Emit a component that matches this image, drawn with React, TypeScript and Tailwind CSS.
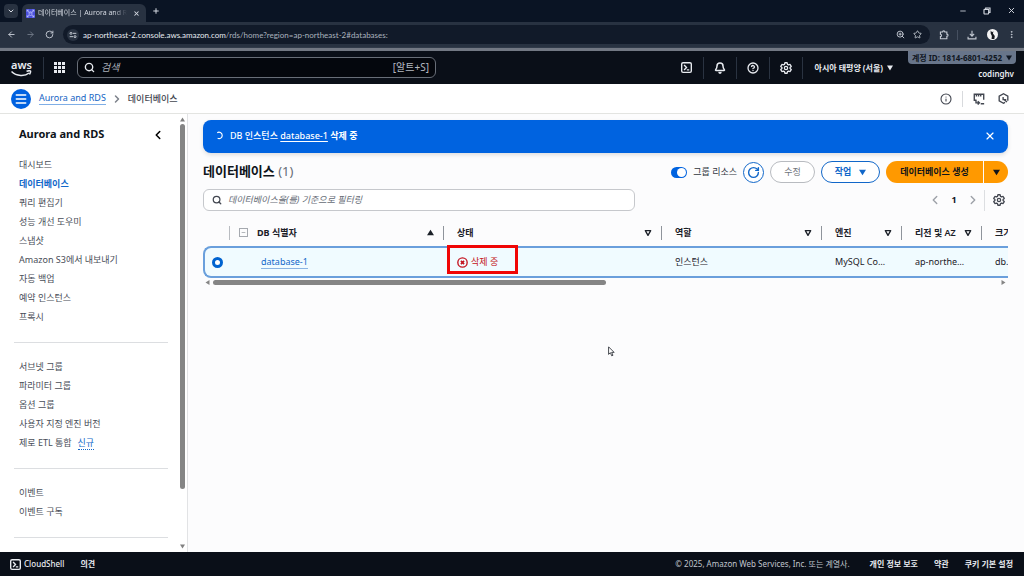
import type { ReactNode } from 'react'
import {
  ArrowLeft,
  ArrowRight,
  Bell,
  ChevronDown,
  ChevronLeft,
  ChevronRight,
  CircleHelp,
  EllipsisVertical,
  Info,
  Menu,
  Minus,
  Plus,
  RotateCw,
  Search,
  Star,
  X,
  ZoomIn,
} from 'lucide-react'

type NavItem = { label: string; active?: boolean; badge?: string }

const navSections: NavItem[][] = [
  [
    { label: '대시보드' },
    { label: '데이터베이스', active: true },
    { label: '쿼리 편집기' },
    { label: '성능 개선 도우미' },
    { label: '스냅샷' },
    { label: 'Amazon S3에서 내보내기' },
    { label: '자동 백업' },
    { label: '예약 인스턴스' },
    { label: '프록시' },
  ],
  [
    { label: '서브넷 그룹' },
    { label: '파라미터 그룹' },
    { label: '옵션 그룹' },
    { label: '사용자 지정 엔진 버전' },
    { label: '제로 ETL 통합', badge: '신규' },
  ],
  [{ label: '이벤트' }, { label: '이벤트 구독' }],
]

function Triangle({ className, direction = 'down' }: { className: string; direction?: 'up' | 'down' | 'left' | 'right' }) {
  const points = {
    up: '0,9 5,1 10,9',
    down: '0,1 10,1 5,9',
    left: '9,0 9,10 1,5',
    right: '1,0 1,10 9,5',
  }
  return (
    <svg viewBox="0 0 10 10" className={className} fill="currentColor" aria-hidden="true">
      <polygon points={points[direction]} />
    </svg>
  )
}

function FilterTriangle() {
  return (
    <svg viewBox="0 0 12 12" className="size-2 shrink-0" fill="none" stroke="currentColor" strokeWidth="2" strokeLinejoin="round" aria-hidden="true">
      <path d="M2 2.500h8L6 9.500z" />
    </svg>
  )
}

function ShellIcon({ className }: { className: string }) {
  return (
    <svg viewBox="0 0 16 16" className={className} fill="none" stroke="currentColor" strokeWidth="2" aria-hidden="true">
      <rect x="1" y="1" width="14" height="14" rx="2" />
      <path d="M4.5 4.5 8 8l-3.5 3.5M8.5 11.5h3.5" />
    </svg>
  )
}

function GearIcon({ className }: { className: string }) {
  return (
    <svg viewBox="0 0 16 16" className={className} fill="none" stroke="currentColor" strokeWidth="1.7" strokeLinejoin="round" aria-hidden="true">
      <path d="M6.5 1h3l.5 2.1 1.4.8 2.1-.6 1.5 2.6-1.6 1.5v1.2l1.6 1.5-1.5 2.6-2.1-.6-1.4.8-.5 2.1h-3L6 12.9l-1.4-.8-2.1.6L1 10.100l1.600-1.500V7.400L1 5.900l1.500-2.600 2.100.6L6 3.100z" />
      <circle cx="8" cy="8" r="2.2" />
    </svg>
  )
}

function BrowserTabs() {
  return (
    <div className="flex h-[22px] items-end bg-[#0a1424] pl-1 text-[#d5dae2]">
      <button aria-label="탭 검색" className="mb-1 flex size-3.5 items-center justify-center rounded bg-[#283241]">
        <ChevronDown className="size-2" strokeWidth={3} />
      </button>
      <div className="ml-1 flex h-[18px] w-[124px] items-center rounded-t-md bg-[#283241] px-1">
        <svg viewBox="0 0 16 16" className="size-[9px] shrink-0 bg-[#4a50dc]" fill="none" stroke="#c6caff" strokeWidth="1.3" aria-hidden="true">
          <path d="m2 2 3 3M14 2l-3 3M2 14l3-3M14 14l-3-3M2 2v3M2 2h3M14 2v3M14 2h-3M2 14v-3M2 14h3M14 14v-3M14 14h-3" />
          <ellipse cx="8" cy="6" rx="2.500" ry="1" />
          <path d="M5.500 6v4.500c0 1.300 5 1.300 5 0V6" />
        </svg>
        <span className="ml-[3px] flex-1 overflow-hidden whitespace-nowrap text-[7px] [mask-image:linear-gradient(to_right,#000_85%,transparent)]">
          데이터베이스 | Aurora and RDS
        </span>
        <button aria-label="탭 닫기" className="ml-1.5 mr-0.5">
          <X className="size-[7px]" strokeWidth={3.500} />
        </button>
      </div>
      <button aria-label="새 탭" className="mb-[7px] ml-1.5">
        <Plus className="size-2" strokeWidth={3} />
      </button>
      <div className="mb-[7px] ml-auto flex items-center gap-4 pr-2">
        <button aria-label="최소화"><Minus className="size-2" strokeWidth={2.500} /></button>
        <button aria-label="창 복원">
          <svg viewBox="0 0 12 12" className="size-2" fill="none" stroke="currentColor" strokeWidth="1.700">
            <rect x="1.500" y="3.500" width="7" height="7" rx="1" />
            <path d="M4 3.500V1.500h6.500V8H8.500" />
          </svg>
        </button>
        <button aria-label="닫기"><X className="size-[9px]" strokeWidth={2.500} /></button>
      </div>
    </div>
  )
}

function AddressBar() {
  return (
    <div className="flex h-[26px] items-center border-b border-[#303a49] bg-[#283241] pl-[7px] pr-2 text-[#c3c9d2]">
      <button aria-label="뒤로"><ArrowLeft className="size-[9px]" strokeWidth={2.500} /></button>
      <button aria-label="앞으로" className="ml-2.5 text-[#6f7885]"><ArrowRight className="size-[9px]" strokeWidth={2.500} /></button>
      <button aria-label="새로고침" className="ml-2.5"><RotateCw className="size-[9px]" strokeWidth={2.500} /></button>
      <div className="ml-[9px] flex h-[19px] flex-1 items-center rounded-full bg-[#111a29] pl-1 pr-2">
        <button aria-label="사이트 정보" className="flex size-3 items-center justify-center rounded-full bg-[#283241]">
          <svg viewBox="0 0 12 12" className="size-2" fill="none" stroke="currentColor" strokeWidth="1.500">
            <circle cx="3" cy="3.500" r="1.500" />
            <path d="M6 3.500h5M1 8.500h5" />
            <circle cx="9" cy="8.500" r="1.500" />
          </svg>
        </button>
        <div className="ml-1 flex-1 whitespace-nowrap font-[Lato,sans-serif] text-[8px] text-[#aab2be]">
          <span className="text-[#e6eaf0]">ap-northeast-2.console.aws.amazon.com</span>
          /rds/home?region=ap-northeast-2#databases:
        </div>
        <button aria-label="확대/축소"><ZoomIn className="size-[9px]" strokeWidth={2.500} /></button>
        <button aria-label="북마크" className="ml-2"><Star className="size-[9px]" strokeWidth={2.300} /></button>
      </div>
      <button aria-label="확장 프로그램" className="ml-[9px]">
        <svg viewBox="0 0 14 14" className="size-2.5" fill="none" stroke="currentColor" strokeWidth="1.600">
          <path d="M2 2.800h3c0-2.200 3.200-2.200 3.200 0H11v3c2.200 0 2.200 3 0 3v3.400H2V9.200c2-.2 2-3 0-3.200z" />
        </svg>
      </button>
      <span className="ml-2 h-2.5 w-px bg-[#465060]" />
      <button aria-label="다운로드" className="ml-[9px]">
        <svg viewBox="0 0 14 14" className="size-2.5" fill="none" stroke="currentColor" strokeWidth="1.600">
          <path d="M7 1v7.500M4 5.500l3 3 3-3M1.500 9.500v3h11v-3" />
        </svg>
      </button>
      <button aria-label="프로필" className="ml-2.5">
        <svg viewBox="0 0 12 12" className="size-[11px]">
          <circle cx="6" cy="6" r="6" fill="#f4f4f4" />
          <path d="M4 1.500 5.500 3.500 7 2.500 6.500 5 8.500 7.500 8 11H5l.3-3.500L4 5z" fill="#15181d" />
        </svg>
      </button>
      <button aria-label="메뉴" className="ml-[9px]"><EllipsisVertical className="size-[9px]" strokeWidth={2.500} /></button>
    </div>
  )
}

function HeaderIcon({ label, children }: { label: string; children: ReactNode }) {
  return (
    <button aria-label={label} className="flex h-[22px] w-[33px] items-center justify-center border-r border-[#2a3341]">
      {children}
    </button>
  )
}

function ConsoleHeader() {
  return (
    <header className="flex h-9 items-center border-t-[3px] border-[#727883] bg-[#0a0f18] pl-[11px] text-[#e8ebf0]">
      <a href="#home" aria-label="AWS" className="relative flex h-[22px] w-[33px] items-start border-r border-[#2a3341] text-[11px] font-semibold leading-[15px]">
        aws
        <svg viewBox="0 0 42 14" className="absolute left-0 top-[13px] h-[7px] w-[21px]" fill="none" stroke="currentColor" strokeWidth="3">
          <path d="M1 3c10 10 27 10 35 3M31 2.500c3-1 6-2 8-.5 1 2-1 5-2 7" />
        </svg>
      </a>
      <button aria-label="서비스" className="ml-2.5">
        <svg viewBox="0 0 11 11" className="size-[11px]" fill="currentColor">
          {[0, 4, 8].map((y) => [0, 4, 8].map((x) => <rect key={`${x}-${y}`} x={x} y={y} width="3" height="3" />))}
        </svg>
      </button>
      <label className="ml-3 flex h-[21px] w-[359px] items-center rounded-md border border-[#686e78] bg-[#04070d] px-1.5">
        <Search className="size-[11px] shrink-0" strokeWidth={3} />
        <input aria-label="검색" placeholder="검색" className="ml-1.5 min-w-0 flex-1 bg-transparent text-[10px] outline-none placeholder:italic placeholder:text-[#a9aeb7]" />
        <span className="text-[10px] text-[#b4b9c1]">[알트+S]</span>
      </label>
      <div className="ml-auto flex items-center">
        <HeaderIcon label="CloudShell"><ShellIcon className="size-[11px]" /></HeaderIcon>
        <HeaderIcon label="알림"><Bell className="size-3" strokeWidth={3} /></HeaderIcon>
        <HeaderIcon label="도움말"><CircleHelp className="size-3" strokeWidth={2.600} /></HeaderIcon>
        <HeaderIcon label="설정"><GearIcon className="size-3" /></HeaderIcon>
      </div>
      <button className="ml-3 flex items-center gap-1 whitespace-nowrap text-[8px] font-bold">
        아시아 태평양 (서울)
        <Triangle className="size-1.5" />
      </button>
      <div className="ml-[15px] mr-2 flex h-full w-[108px] flex-col items-end">
        <button className="flex h-[13px] w-full items-center justify-center gap-1 whitespace-nowrap rounded-b-sm bg-[#68758a] text-[8px] font-bold text-[#101722]">
          계정 ID: 1814-6801-4252
          <Triangle className="size-1.5" />
        </button>
        <span className="mr-0.5 mt-1 text-[8px] font-semibold leading-3">codinghv</span>
      </div>
    </header>
  )
}

function Breadcrumbs() {
  return (
    <div className="flex h-[30px] items-center border-b border-[#e3e4e1] bg-white pl-[11px] pr-[15px] text-[#424650]">
      <button aria-label="메뉴" className="flex size-5 items-center justify-center rounded-full bg-[#0061e0] text-white">
        <Menu className="size-3.5" strokeWidth={2.600} />
      </button>
      <nav className="ml-2 flex items-center text-[9px]">
        <a href="#rds" className="border-b border-[#7faee6] text-[#1464c4] leading-3">Aurora and RDS</a>
        <ChevronRight className="mx-[5px] size-3 text-[#7d828b]" strokeWidth={3} />
        <span className="font-medium">데이터베이스</span>
      </nav>
      <div className="ml-auto flex items-center">
        <button aria-label="정보"><Info className="size-3" strokeWidth={2.200} /></button>
        <span className="ml-2.5 h-4 w-px bg-[#d8dadd]" />
        <button aria-label="튜토리얼" className="ml-2.5">
          <svg viewBox="0 0 14 14" className="size-3" fill="none" stroke="currentColor" strokeWidth="1.600">
            <path d="M4 8.500H1.500V1.500h11V8M4 2v2M6.500 2v2M9 2v2M3.500 8v3.500H7M5.500 9.500l2 2-2 2M9 12.500h4" />
          </svg>
        </button>
        <button aria-label="최근 항목" className="ml-[13px]">
          <svg viewBox="0 0 14 14" className="size-[11px]" fill="none" stroke="currentColor" strokeWidth="1.700">
            <path d="M9 12 7 13 1.500 10V4L7 1l5.500 3v6M6.500 5v3.500h4M7 8l4.500 3.500" />
          </svg>
        </button>
      </div>
    </div>
  )
}

function Sidebar() {
  return (
    <aside className="flex w-[188px] shrink-0 overflow-hidden border-r border-[#e2e3e5] bg-white">
      <div className="flex-1 pl-3.5 pr-2.5">
        <div className="flex h-[41px] items-center justify-between pl-[5px] pr-[3px]">
          <h2 className="text-[11px] font-bold text-[#0f141a]">Aurora and RDS</h2>
          <button aria-label="탐색 닫기"><ChevronLeft className="size-3.5" strokeWidth={2.600} /></button>
        </div>
        {navSections.map((items) => (
          <ul key={items[0].label} className="mb-3.5 border-b border-[#dcdee1] pb-4 pl-[5px] text-[9px] leading-[19px] text-[#484d57]">
            {items.map((item) => (
              <li key={item.label} className="whitespace-nowrap">
                <a href="#nav" className={item.active ? 'font-bold text-[#1167c9]' : ''}>{item.label}</a>
                {item.badge && (
                  <button className="ml-1.5 border-b border-dotted border-[#1167c9] leading-3 text-[#1167c9]">{item.badge}</button>
                )}
              </li>
            ))}
          </ul>
        ))}
      </div>
      <div className="flex w-[9px] flex-col items-center py-[3px] text-[#808080]">
        <Triangle direction="up" className="size-[5px]" />
        <div className="mt-0.5 flex-1">
          <div className="h-[87%] w-[5px] rounded-full bg-[#858585]" />
        </div>
        <Triangle className="size-[5px]" />
      </div>
    </aside>
  )
}

function Notification() {
  return (
    <div role="status" className="flex h-[33px] items-center rounded-lg bg-[#0063e0] pb-0.5 pl-3 pr-3 text-[9px] font-medium text-white shadow-[0_2px_4px_#0000001f]">
      <svg viewBox="0 0 12 12" className="size-[9px]" fill="none" stroke="currentColor" strokeWidth="1.500" aria-hidden="true">
        <path d="M3 2.300A4.300 4.300 0 1 1 3.500 9.800" />
      </svg>
      <p className="ml-1.5 flex-1">
        DB 인스턴스 <a href="#database-1" className="underline underline-offset-2">database-1</a> <span className="font-bold">삭제 중</span>
      </p>
      <button aria-label="닫기"><X className="size-3" strokeWidth={2.300} /></button>
    </div>
  )
}

function Toolbar() {
  return (
    <div className="mt-2 flex h-[22px] items-center">
      <h1 className="text-[13px] font-bold text-[#0f141a]">
        데이터베이스 <span className="font-normal text-[#656b75]">(1)</span>
      </h1>
      <label className="ml-auto flex items-center gap-1.5 text-[9px] text-[#30353d]">
        <input
          type="checkbox"
          role="switch"
          defaultChecked
          className="flex h-[11px] w-4 appearance-none items-center justify-end rounded-full bg-[#0063e0] px-px before:size-[9px] before:rounded-full before:bg-white"
        />
        그룹 리소스
      </label>
      <button aria-label="새로고침" className="ml-1.5 flex size-[21px] items-center justify-center rounded-full border border-[#1167c9] bg-white text-[#1167c9]">
        <RotateCw className="size-[13px]" strokeWidth={2.600} />
      </button>
      <button disabled className="ml-1.5 h-[22px] w-[45px] rounded-full border border-[#b8bbc0] bg-white text-[9px] text-[#6f747c]">
        수정
      </button>
      <button className="ml-1.5 flex h-[22px] w-[59px] items-center justify-center gap-2 rounded-full border border-[#1167c9] bg-white text-[9px] font-bold text-[#1167c9]">
        작업
        <Triangle className="size-[7px]" />
      </button>
      <div className="ml-1.5 flex gap-px overflow-hidden rounded-full text-[9px] font-bold text-[#0f141a]">
        <button className="h-[22px] w-[97px] bg-[#ff9900]">데이터베이스 생성</button>
        <button aria-label="생성 옵션" className="flex w-6 items-center justify-center bg-[#ff9900]">
          <Triangle className="size-[7px]" />
        </button>
      </div>
    </div>
  )
}

function FilterRow() {
  return (
    <div className="mt-1.5 flex items-center text-[#424650]">
      <label className="flex h-[22px] w-[432px] items-center rounded-md border border-[#c6c8cc] bg-white pl-2">
        <Search className="size-2.5 shrink-0" strokeWidth={3} />
        <input
          aria-label="데이터베이스 필터링"
          placeholder="데이터베이스을(를) 기준으로 필터링"
          className="ml-1.5 min-w-0 flex-1 bg-transparent text-[9px] outline-none placeholder:italic placeholder:text-[#656b75]"
        />
      </label>
      <div className="ml-auto flex items-center">
        <button aria-label="이전 페이지" className="text-[#9da1a8]"><ChevronLeft className="size-3.5" strokeWidth={2.400} /></button>
        <span className="w-6 text-center text-[9px] font-bold text-[#0f141a]">1</span>
        <button aria-label="다음 페이지" className="text-[#9da1a8]"><ChevronRight className="size-3.5" strokeWidth={2.400} /></button>
        <span className="ml-1 h-[21px] w-px bg-[#dcdee1]" />
        <button aria-label="기본 설정" className="ml-2 mr-[3px]"><GearIcon className="size-3" /></button>
      </div>
    </div>
  )
}

function HeaderCell({ label }: { label: string }) {
  return (
    <th className="p-0 text-left font-semibold">
      <div className="flex h-3.5 items-center justify-between border-l border-[#8f949b] pl-[13px] pr-[9px]">
        <span className="whitespace-nowrap">{label}</span>
        <FilterTriangle />
      </div>
    </th>
  )
}

function DatabaseTable() {
  return (
    <div>
      <div className="overflow-hidden pt-2">
        <table className="w-[1040px] table-fixed border-separate border-spacing-0 text-[9px] text-[#1b2028]">
          <colgroup>
            <col className="w-[26px]" />
            <col className="w-[214px]" />
            <col className="w-[218px]" />
            <col className="w-[160px]" />
            <col className="w-20" />
            <col className="w-20" />
            <col />
          </colgroup>
          <thead>
            <tr className="h-[27px]">
              <th aria-label="선택" className="p-0" />
              <th className="p-0 text-left font-bold">
                <div className="flex h-3.5 items-center border-l border-[#b9bcc1] pl-[9px] pr-[9px]">
                  <button aria-label="모두 접기" className="flex size-[9px] items-center justify-center border border-[#a5a9af] text-[#a5a9af]">
                    <Minus className="size-[5px]" strokeWidth={4} />
                  </button>
                  <span className="ml-[9px] flex-1">DB 식별자</span>
                  <Triangle direction="up" className="size-[7px]" />
                </div>
              </th>
              <HeaderCell label="상태" />
              <HeaderCell label="역할" />
              <HeaderCell label="엔진" />
              <HeaderCell label="리전 및 AZ" />
              <HeaderCell label="크기" />
            </tr>
          </thead>
          <tbody>
            <tr className="h-8 bg-[#f0fbff] [&>td]:border-y-2 [&>td]:border-[#6a9fdc] [&>td]:p-0 [&>td]:pl-3.5">
              <td className="rounded-l-lg border-l-2">
                <input
                  type="radio"
                  name="database"
                  defaultChecked
                  aria-label="database-1 선택"
                  className="-ml-[7px] block size-[11px] appearance-none rounded-full border-[3px] border-[#0063d0] bg-white"
                />
              </td>
              <td>
                <a href="#database-1" className="ml-[18px] inline-block border-b border-[#8ab4e4] leading-3 text-[#1167c9]">database-1</a>
              </td>
              <td className="relative">
                <span className="flex items-center gap-[3px] text-[#c41420]">
                  <svg viewBox="0 0 16 16" className="size-[11px]" fill="none" stroke="currentColor" strokeWidth="2" aria-hidden="true">
                    <circle cx="8" cy="8" r="6.800" />
                    <path d="m5.700 5.700 4.600 4.600M10.300 5.700l-4.600 4.600" strokeWidth="2.400" />
                  </svg>
                  삭제 중
                </span>
                <div className="pointer-events-none absolute -top-[3px] left-1 h-[29px] w-[71px] border-[3px] border-[#f00505]" />
              </td>
              <td>인스턴스</td>
              <td>MySQL Co…</td>
              <td>ap-northe…</td>
              <td>db.</td>
            </tr>
          </tbody>
        </table>
      </div>
      <div className="mt-0.5 flex items-center px-0.5 text-[#858585]">
        <Triangle direction="left" className="size-[5px]" />
        <div className="mx-[3px] flex-1">
          <div className="h-[5px] w-1/2 rounded-full bg-[#858585]" />
        </div>
        <Triangle direction="right" className="size-[5px]" />
      </div>
    </div>
  )
}

function Footer() {
  return (
    <footer className="flex h-6 items-center bg-[#0a0f18] pl-2.5 pr-[11px] text-[8px] text-[#e8ebf0]">
      <a href="#cloudshell" className="flex items-center gap-[3px] font-medium">
        <ShellIcon className="size-[11px]" />
        CloudShell
      </a>
      <a href="#feedback" className="ml-4 font-bold">의견</a>
      <span className="ml-auto text-[#c0c5cd]">© 2025, Amazon Web Services, Inc. 또는 계열사.</span>
      <a href="#privacy" className="ml-5 font-bold">개인 정보 보호</a>
      <a href="#terms" className="ml-4 font-bold">약관</a>
      <a href="#cookies" className="ml-4 font-bold">쿠키 기본 설정</a>
    </footer>
  )
}

export default function App() {
  return (
    <div className="relative flex h-screen flex-col overflow-hidden bg-[#fcfcfd] font-['Noto_Sans','Noto_Sans_CJK_KR',sans-serif]">
      <BrowserTabs />
      <AddressBar />
      <ConsoleHeader />
      <Breadcrumbs />
      <div className="flex min-h-0 flex-1">
        <Sidebar />
        <main className="min-w-0 flex-1 pl-[15px] pr-4 pt-1.5">
          <Notification />
          <Toolbar />
          <FilterRow />
          <DatabaseTable />
        </main>
      </div>
      <Footer />
      <svg viewBox="0 0 12 18" className="pointer-events-none absolute left-[608px] top-[346px] h-[11px] w-[7px]" fill="#fff" stroke="#30343a" strokeWidth="1.500" aria-hidden="true">
        <path d="M1 1v13l3-3 2.500 5.500 2-1L6.200 10.500H10.500z" />
      </svg>
    </div>
  )
}
